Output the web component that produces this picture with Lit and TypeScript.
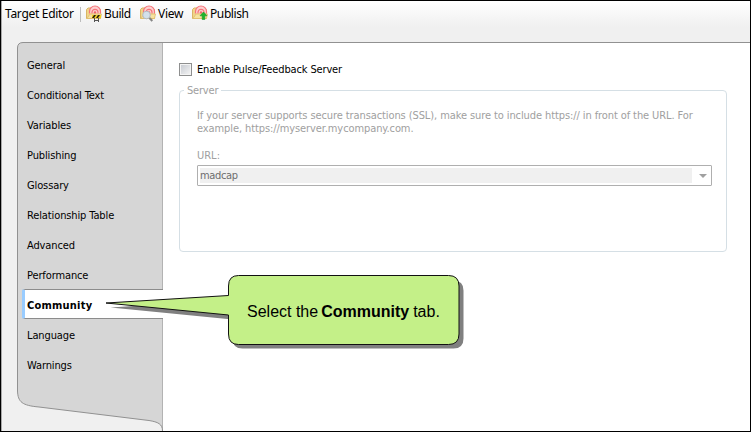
import { LitElement, html, css, svg } from "lit";
import { customElement, property } from "lit/decorators.js";
import { classMap } from "lit/directives/class-map.js";

@customElement("tool-icon")
class ToolIcon extends LitElement {
  @property() kind = "build";
  static styles = css`
    :host { display: block; width: 16px; height: 18px; }
    svg { display: block; overflow: visible; }
  `;
  render() {
    const badge =
      this.kind === "build"
        ? svg`<path d="M6 10h9v3H6z" fill="#f1ce22"/>
            <path d="M6 13l2-3h2l-2 3zM10 13l2-3h2l-2 3z" fill="#282410"/>
            <path d="M8.500 13v4M12.500 13v4M8 15.500h5" stroke="#555" fill="none"/>`
        : this.kind === "view"
        ? svg`<circle cx="6.500" cy="10" r="3.800" fill="#d3e0ea" stroke="#b3bac2"/>
            <path d="M9.500 13l2.800 3" stroke="#858585" stroke-width="2"/>`
        : svg`<path d="M11.500 7l3.500 3.800h-2.200v3.700h-2.600v-3.700H8z" fill="#1bb52d" stroke="#14982a" stroke-width=".6"/>`;
    return html`<svg width="16" height="18" viewBox="0 0 16 18">
      <path d="M.5 4.500l1.500-1.500h3l1 1.500h8.500v9H.5z" fill="#f0d58a" stroke="#d9b565" />
      <path d="M3.500 8.500V6.500A5.500 5.500 0 0 1 14.500 6.500V8.500z" fill="#fdd0d0" />
      <path d="M3.500 8.500V6.500A5.500 5.500 0 0 1 14.500 6.500V8.500M6 8.500V7.300A3 3 0 0 1 12 7.300V8.500" fill="none" stroke="#f5747a" stroke-width="1.200" />
      <circle cx="9" cy="7.500" r="1.200" fill="#ee656a" />
      <path d="M1 13.500L4 9h11.500l-1 4.500z" fill="#f6e2a0" stroke="#e0bd6c" stroke-width=".8" />
      ${badge}
    </svg>`;
  }
}

@customElement("app-root")
class AppRoot extends LitElement {
  static styles = css`
    :host {
      display: flex; flex-direction: column; position: relative; box-sizing: border-box;
      width: 751px; height: 432px; overflow: hidden;
      border: 1px solid #000; background: #f0f0f0; color: #000;
      box-shadow: inset 1px 0 #a8a8a8;
      font: 11px/13px "DejaVu Sans Condensed", "DejaVu Sans", sans-serif;
      font-stretch: condensed;
    }
    .bar {
      height: 26px; flex: none; display: flex; align-items: center; white-space: nowrap;
      margin-left: 1px; padding-left: 3px; background: linear-gradient(#fff, #f0f0f0);
      font: 12px/16px "Noto Sans", sans-serif;
    }
    .title { width: 75px; letter-spacing: -0.3px; }
    .sep { width: 1px; height: 15px; background: #bdbdbd; margin-right: 5px; }
    .tool { display: flex; align-items: center; gap: 2px; letter-spacing: -0.4px; }
    .tool.build { width: 54px; }
    .tool.view { width: 52px; letter-spacing: -0.25px; }
    .main { flex: 1; margin: 15px 0 0 16px; display: flex; min-height: 0; }
    .side {
      position: relative; width: 146px; flex: none; padding-top: 8px; box-sizing: border-box;
      letter-spacing: -0.12px;
    }
    .shape { position: absolute; left: 0; top: 0; }
    .tab {
      position: relative; height: 30px; box-sizing: border-box; display: flex; align-items: center;
      padding-left: 10px; white-space: nowrap;
    }
    .tab.on {
      margin: -1px 0 1px 5px; padding: 2px 0 0 2px; background: #fff; font-weight: bold;
      letter-spacing: 0.22px;
      border: solid #8c8c8c; border-width: 1px 0; border-left: 3px solid #99ccff;
      border-radius: 2px 0 0 2px;
    }
    .pane {
      flex: 1; background: #fff; border-top: 1px solid #919191; padding: 19px 22px 0 16px;
      display: flex; flex-direction: column;
    }
    .check {
      display: flex; align-items: center; gap: 5px; height: 14px; white-space: nowrap;
      letter-spacing: -0.14px;
    }
    .box {
      width: 13px; height: 13px; box-sizing: border-box; border: 1px solid #8e8f8f;
      background: linear-gradient(135deg, #c4c8cf, #f6f6f6); box-shadow: inset 0 0 0 1px #f4f4f4;
    }
    .group {
      margin: 8px 0 0; padding: 0 14px 0 17px; border: 1px solid #d5dfe5; border-radius: 4px;
      height: 168px; box-sizing: border-box; color: #a0a0a0; min-width: 0; width: 548px;
    }
    legend { padding: 0 3px; margin-left: -13px; height: 13px; letter-spacing: -0.2px; }
    .hint { margin-top: 12px; white-space: nowrap; letter-spacing: -0.095px; }
    .url { margin-top: 14px; }
    .combo {
      margin-top: 3px; height: 21px; box-sizing: border-box; border: 1px solid #afafaf; border-radius: 1px;
      display: flex; align-items: center; padding: 0 4px 0 2px; justify-content: space-between;
    }
    .value {
      background: #f0f0f0; color: #6d6d6d; width: 492px; height: 15px; line-height: 15px;
      letter-spacing: -0.35px;
    }
    .arrow { border: 4px solid transparent; border-top-color: #a0a0a0; border-bottom: 0; }
    .callout { position: absolute; left: 99px; top: 264px; width: 380px; height: 95px; }
    .callout svg { display: block; }
    .say {
      position: absolute; left: 147px; top: 37px; font: 16px/19px "Liberation Sans", sans-serif;
      white-space: nowrap; display: flex;
    }
    .say b { margin: 0 4px 0 3px; }
  `;

  tabs = [
    "General", "Conditional Text", "Variables", "Publishing", "Glossary",
    "Relationship Table", "Advanced", "Performance", "Community", "Language", "Warnings",
  ];

  render() {
    return html`
      <div class="bar">
        <span class="title">Target Editor</span><span class="sep"></span>
        <span class="tool build"><tool-icon kind="build"></tool-icon><span>Build</span></span>
        <span class="tool view"><tool-icon kind="view"></tool-icon><span>View</span></span>
        <span class="tool"><tool-icon kind="publish"></tool-icon><span>Publish</span></span>
      </div>
      <div class="main">
        <div class="side">
          <svg class="shape" width="146" height="389">
            <path d="M145.500 389C145.500 382 141 380 132 378.500L22 365C5 363.500 1 360 .5 349V6Q.5 .5 6 .5H146V389z" fill="#d6d6d6" stroke="#919191" />
          </svg>
          ${this.tabs.map((t) => html`<div class=${classMap({ tab: true, on: t === "Community" })}><span>${t}</span></div>`)}
        </div>
        <div class="pane">
          <div class="check"><span class="box"></span><span>Enable Pulse/Feedback Server</span></div>
          <fieldset class="group">
            <legend>Server</legend>
            <div class="hint">
              <span>If your server supports secure transactions (SSL), make sure to include https:// in front of the URL. For</span><br />
              <span>example, https://myserver.mycompany.com.</span>
            </div>
            <div class="url">URL:</div>
            <div class="combo"><span class="value">madcap</span><span class="arrow"></span></div>
          </fieldset>
        </div>
      </div>
      <div class="callout">
        <svg width="380" height="95">
          <path transform="translate(4.500 4.500)" d="M138 11H349Q359 11 359 21V69Q359 79 349 79H138Q128 79 128 69V50L6 38L128 30V21Q128 11 138 11z" fill="#808080" />
          <path d="M138.500 10.500H348.500Q359 10.500 359 21V69Q359 79.500 348.500 79.500H138.500Q128.500 79.500 128.500 69V50L6 38L128.500 30.500V21Q128.500 10.500 138.500 10.500z" fill="#c4f088" stroke="#111" />
        </svg>
        <div class="say"><span>Select the</span><b>Community</b><span>tab.</span></div>
      </div>
    `;
  }
}
